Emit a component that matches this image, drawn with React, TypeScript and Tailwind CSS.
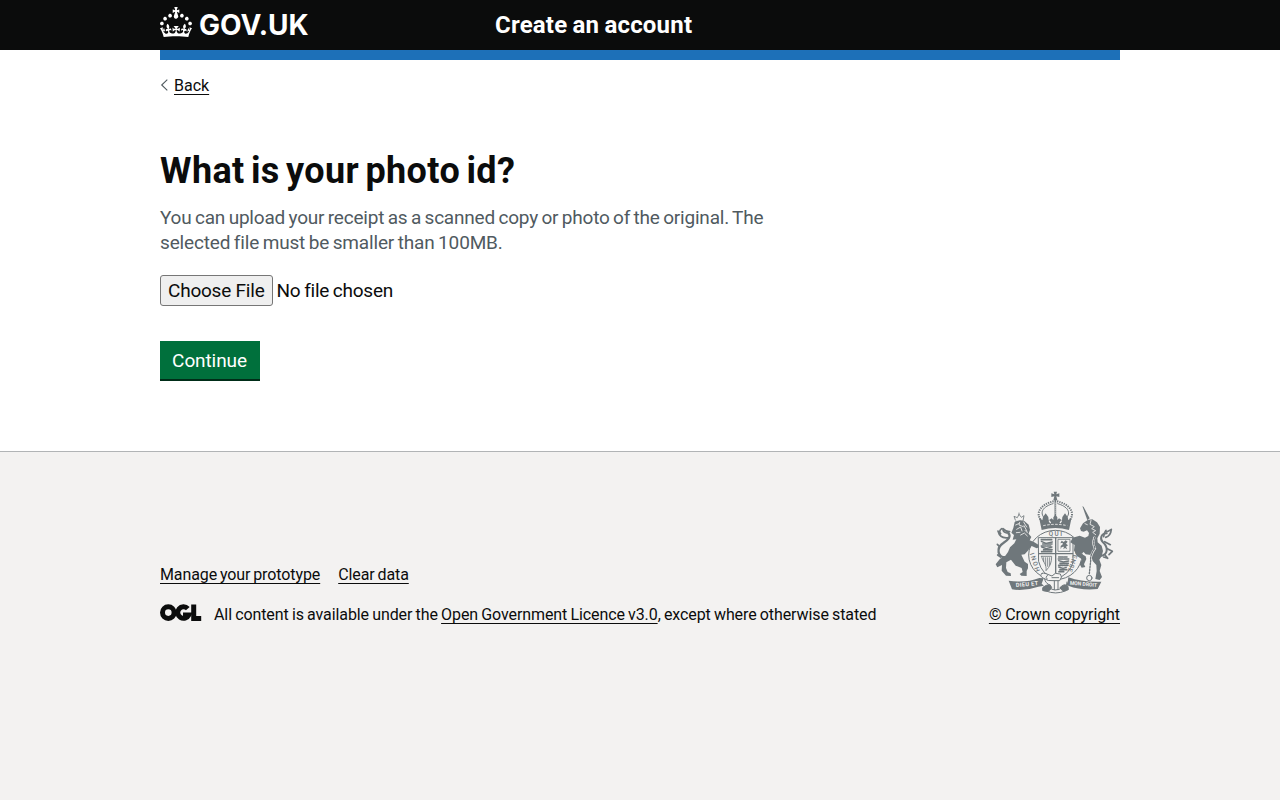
import React from 'react';

function Crown() {
  return (
    <svg className="h-[30px] w-8 shrink-0" viewBox="0 0 32 30" fill="currentColor" aria-hidden="true">
      <path d="M22.6 10.4c-1 .4-2-.1-2.4-1-.4-.9.1-2 1-2.4.9-.4 2 .1 2.4 1s-.1 2-1 2.4m4.9 3c-1 .4-2-.1-2.4-1-.4-.9.1-2 1-2.4.9-.4 2 .1 2.4 1s0 2-1 2.4m3.3 4.8c-1 .4-2-.1-2.4-1-.4-.9.1-2 1-2.4.9-.4 2 .1 2.4 1s-.1 2-1 2.4M17 4.7l2.3 1.2V2.5l-2.3.7-.2-.2.9-3h-3.4l.9 3-.2.2c-.1.1-2.3-.7-2.3-.7v3.4L15 4.7c.1.1.1.2.2.2l-1.3 4c-.1.2-.1.4-.1.6 0 1.1.8 2 1.9 2.2h.7c1-.2 1.9-1.1 1.9-2.1 0-.2 0-.4-.1-.6l-1.3-4c-.1-.2 0-.2.1-.3m-7.6 5.7c.9.4 2-.1 2.4-1 .4-.9-.1-2-1-2.4-.9-.4-2 .1-2.4 1s0 2 1 2.4m-5 3c.9.4 2-.1 2.4-1 .4-.9-.1-2-1-2.4-.9-.4-2 .1-2.4 1s.1 2 1 2.4m-3.2 4.8c.9.4 2-.1 2.4-1 .4-.9-.1-2-1-2.4-.9-.4-2 .1-2.4 1s0 2 1 2.4m14.8 11c4.4 0 8.6.3 12.3.8 1.1-4.5 2.4-7 3.7-8.8l-2.5-.9c.2 1.3.3 1.9 0 2.7-.4-.4-.8-1.1-1.1-2.3l-1.2 4c.7-.5 1.3-.8 2-.9-1.1 2.5-2.6 3.1-3.5 3-1.1-.2-1.7-1.2-1.5-2.1.3-1.2 1.5-1.5 2.1-.1 1.1-2.3-.8-3-2-2.3 1.9-1.9 2.1-3.5.6-5.6-2.1 1.6-2.1 3.2-1.2 5.5-1.2-1.4-3.2-.6-2.5 1.6.9-1.4 2.1-.5 1.9.8-.2 1.1-1.7 2.1-3.5 1.9-2.7-.2-2.9-2.1-2.9-3.6.7-.1 1.9.5 2.9 1.9l.4-4.3c-1.1 1.1-2.1 1.4-3.2 1.4.4-1.2 2.1-3 2.1-3h-5.4s1.7 1.9 2.1 3c-1.1 0-2.1-.2-3.2-1.4l.4 4.3c1-1.4 2.2-2 2.9-1.9-.1 1.5-.2 3.4-2.9 3.6-1.9.2-3.4-.8-3.5-1.9-.2-1.3 1-2.2 1.9-.8.7-2.3-1.2-3-2.5-1.6.9-2.2.9-3.9-1.2-5.5-1.5 2-1.3 3.7.6 5.6-1.2-.7-3.1 0-2 2.3.6-1.4 1.8-1.1 2.1.1.2.9-.3 1.9-1.5 2.1-.9.2-2.4-.5-3.5-3 .6 0 1.2.3 2 .9l-1.2-4c-.3 1.1-.7 1.9-1.1 2.3-.3-.8-.2-1.4 0-2.7l-2.9.9C1.3 23 2.6 25.5 3.7 30c3.7-.5 7.9-.8 12.3-.8" />
    </svg>
  );
}

function RoyalArms() {
  return (
    <svg className="h-[104px] w-[125px]" viewBox="30 18 375 312" fill="none" stroke="#6f777b" strokeWidth="3" strokeLinecap="round" strokeLinejoin="round" aria-hidden="true">
      {/* crown */}
      <path d="M206 20h10l-2 8 9-3v11l-9-2 3 12h-12l3-12-9 2V25l9 3z" fill="#6f777b" stroke="none" />
      <path d="M171 109C148 86 166 57 209 48M251 109c23-23 5-52-38-61" strokeWidth="6" strokeDasharray="4 3" strokeLinecap="butt" />
      <path d="M179 100c-18-18-4-36 25-44M243 100c18-18 4-36-25-44" strokeWidth="3" />
      <path d="M211 45v60" strokeWidth="5" />
      <path d="M211 54v36" stroke="#f3f2f1" strokeWidth="2" strokeDasharray="1 5" />
      <path d="M162 97l10 9 2-10 8-11 8 11 1 10 9-6 5 5 0-8 6-8 6 8 0 8 5-5 9 6 1-10 8-11 8 11 2 10 10-9-8 38q-41-12-82 0z" fill="#6f777b" stroke="none" />
      <path d="M175 122q36-8 72 0" stroke="#f3f2f1" strokeWidth="3" strokeDasharray="7 5" strokeLinecap="butt" />
      <path d="M193 108l3 5M229 108l-3 5" stroke="#f3f2f1" strokeWidth="4" />
      {/* garter and shield */}
      <ellipse cx="211" cy="210" rx="80" ry="74" strokeWidth="3" />
      <path d="M161 158h103v74q-10 38-53 50-41-13-50-52z" fill="#f3f2f1" strokeWidth="3" />
      <path d="M212 158v121M162 206h101" strokeWidth="4" />
      <path d="M169 164h33M173 177h28M169 183h28M176 194h25M170 200h30M221 216h27M220 222h33M225 235h27M221 241h28M225 254h20M222 260h17" strokeWidth="5" strokeDasharray="8 2 4 3" />
      <path d="M169 169l14 6 19-4M170 186l14 5 17-5M221 227l14 4 16-3M221 246l13 4 10-3" strokeWidth="4" />
      <path d="M220 163h35v36h-35z" strokeWidth="2.5" />
      <path d="M230 167l6 4 6-5 6 4-5 6 6 5-6 4 4 8-7-4-5 4 2-8-7 1-3 7 0-10 7-6-2-4-6 2z" fill="#6f777b" stroke="none" />
      <path d="M170 214h30q1 25-17 43c3-21-12-28-13-43zM176 218v12M182 218v23M188 218v26M194 218v22" strokeWidth="2.5" />
      <g fill="#6f777b" stroke="none" fontFamily="Roboto, sans-serif" fontSize="19" fontWeight="500">
        <text x="191" y="154" textLength="40">QUI</text>
        <text transform="translate(165 257) rotate(-108)" textLength="58">HONI</text>
        <text transform="translate(269 194) rotate(108)" textLength="68">PENSE</text>
      </g>
      {/* lion */}
      <path d="M91 105l-4-11 10 4 5-10 7 9 8-5-3 16M92 109h22M102 89v-5" strokeWidth="2.5" />
      <path d="M89 111l16-5 13 2 13 11 4 15-4 12 8 10-5 10 14 6 12 7 2 8-7 3-15-7-12 15-9 10-10 1 10 21 10 7v13l-4 8v15l-16-1-5-5 9-6-3-12-18-7-14-18-14 8-1 17 5 12 9 4 1 8-15-1-13-15 1-17-14 7-5-9 13-17 15-7 9-13 6-14 13-12 6-12-11 1 4-14-8-7 6-14z" fill="#6f777b" stroke="none" />
      <path d="M92 120l9-4M104 112l-2 8 13 5M95 133l12-7 4 12M94 143l11-1M116 111l9 15M117 122l9 17M107 150l11-6 9 9M120 136l8 8" stroke="#f3f2f1" strokeWidth="2.5" />
      <path d="M65 216c-30 5-31-29-10-42 12-8 26-19 14-31" strokeWidth="7" />
      <path d="M70 158q-25 4-31-20M47 146q-7-7 3-15M65 144q-12-2-11-13 10 10 20 9M47 216l-9-6M44 185l-7-7" strokeWidth="5" />
      {/* unicorn */}
      <path d="M292 63l4 3 18 34-7 6z" fill="#6f777b" stroke="none" />
      <path d="M294 115L308 105 322 103 336 112 345 126 344 146 337 160 338 172 350 182 354 198 350 214 343 224 349 240 344 258 351 276 344 285 331 282 335 258 334 240 323 228 318 210 302 208 296 201 289 206 302 214 304 222 297 238 301 246 290 248 284 238 291 223 275 212 267 196 269 180 256 172 263 158 284 152 300 158 310 153 312 144 306 136 296 140 288 138 285 130z" fill="#6f777b" stroke="none" />
      <path d="M300 116l7 3M318 106l-3 12 13 7-8 6 12 6-9 5 9 7" stroke="#f3f2f1" strokeWidth="2.5" />
      <path d="M328 158q-6 19 2 32-15 21-13 36-5 10-4 22" stroke="#f3f2f1" strokeWidth="7" />
      <path d="M329 157q-6 19 1 32-15 21-13 38l-4 39" strokeWidth="4" strokeDasharray="5 4" />
      <circle cx="313" cy="279" r="8" strokeWidth="3" />
      <path d="M346 213c24-3 24-26 8-41-10-10-7-26 11-27" strokeWidth="6" />
      <path d="M356 155q3-16 7-19-3 10 16-3-2 20-17 24M359 170l17 9M367 191l15 8-10 10M360 210l8 10-12-4" strokeWidth="5" />
      {/* motto ribbon and base */}
      <path d="M71 287q50 8 92-8l13 1-6 16 7 6-17 3q-41 14-79 8zM250 277q42 15 99 13l-11 22q-50 5-88-10l-10-2 8-8z" fill="#6f777b" stroke="none" />
      <text x="93" y="306" transform="rotate(-5 93 306)" fill="#f3f2f1" stroke="none" fontFamily="Roboto, sans-serif" fontSize="17" fontWeight="700" textLength="67">DIEU ET</text>
      <text x="254" y="299" transform="rotate(5 254 299)" fill="#f3f2f1" stroke="none" fontFamily="Roboto, sans-serif" fontSize="16" fontWeight="700" textLength="82" lengthAdjust="spacingAndGlyphs">MON DROIT</text>
      <path d="M171 265q-9 8 3 14 15 11 33 8h17q10-12 2-20l-15-2-10 8-18-7q-9-3-12-1zM187 271q-8 6-1 11M201 278h20M179 282q1 13 18 19-6 14-21 6M246 291q0 16-14 17-10 7-22 7-11 0-17-9" fill="#f3f2f1" />
      <path d="M174 307q20-16 26 0-5 16-26 10zM226 307q12-14 23-3l1 10q-21 10-24-7z" fill="#6f777b" />
      <path d="M183 318q29 12 58 0M208 288v26M219 288v26" strokeWidth="3" />
    </svg>
  );
}

const linkClass = 'underline decoration-1 underline-offset-[3px]';

export default function App() {
  return (
    <div className="flex min-h-screen flex-col bg-white font-['Roboto','Liberation_Sans',sans-serif] text-[#0b0c0c]">
      <header className="h-[50px] bg-[#0b0c0c] text-white">
        <div className="mx-auto flex h-[60px] w-[960px] items-start border-b-[10px] border-[#1d70b8]">
          <a href="#" className="flex w-[335px] items-start pt-[7px]">
            <Crown />
            <span className="ml-[7px] pt-[2px] font-['Inter',sans-serif] text-[28px] leading-[32px] font-bold">GOV.UK</span>
          </a>
          <a href="#" className="pt-[10px] text-2xl leading-[30px] font-bold tracking-[0.2px] [word-spacing:-1px] whitespace-nowrap">Create an account</a>
        </div>
      </header>
      <div className="mx-auto w-[960px] pt-[26px]">
        <a href="#" className="flex h-5 items-center text-base leading-5">
          <svg className="mr-[6px] mb-[2px] h-3 w-2" viewBox="0 0 8 12" fill="none" stroke="#505a5f" strokeWidth="1.1" aria-hidden="true">
            <path d="M7.3.6 1.7 6l5.6 5.4" />
          </svg>
          <span className={linkClass}>Back</span>
        </a>
        <main className="pt-[55px] pb-[70px]">
          <h1 className="text-[36px] leading-[40px] font-bold tracking-[0.38px] [word-spacing:-3px] whitespace-nowrap">What is your photo id?</h1>
          <p className="mt-[14px] text-[19px] leading-[25px] whitespace-nowrap text-[#505a5f]">
            <span className="tracking-[-0.21px] [word-spacing:-1px]">You can upload your receipt as a scanned copy or photo of the original. The</span>
            <br />
            <span className="tracking-[-0.16px] [word-spacing:-1px]">selected file must be smaller than 100MB.</span>
          </p>
          <input
            type="file"
            aria-label="Photo id"
            className="mt-5 block h-[31px] w-[400px] text-[19px] leading-[25px] tracking-[-0.25px] [word-spacing:-0.7px] file:mr-1 file:h-[31px] file:w-[112.5px] file:rounded-[3px] file:border file:border-[#767676] file:bg-[#efefef] file:p-0 file:tracking-[-0.22px]"
          />
          <button className="mt-[35px] block h-[38px] w-[100px] bg-[#00703c] pr-[7px] pl-[6px] text-[19px] leading-[19px] tracking-[-0.1px] text-white shadow-[0_2px_0_#002d18]">Continue</button>
        </main>
      </div>
      <footer className="mt-0.5 flex-1 border-t border-[#b1b4b6] bg-[#f3f2f1] text-base leading-5">
        <div className="mx-auto flex w-[960px] items-end justify-between pt-[39px]">
          <div>
            <div className="mb-5 flex gap-[18px] tracking-[-0.1px] whitespace-nowrap [word-spacing:-1px]">
              <a href="#" className={linkClass}>Manage your prototype</a>
              <a href="#" className={linkClass}>Clear data</a>
            </div>
            <div className="flex h-5 items-center">
              <svg className="mb-[5px] h-[18px] w-[54px]" viewBox="0 0 54 18" aria-hidden="true">
                <g fill="none" stroke="#0b0c0c" strokeWidth="5">
                  <circle cx="8.3" cy="8.6" r="5.8" />
                  <path d="M27.8 4.6a5.8 5.8 0 1 0 1 6.4H23" />
                  <path d="M33.7.4v14h7.5" />
                </g>
              </svg>
              <span className="tracking-[-0.1px] whitespace-nowrap [word-spacing:-0.6px]">
                All content is available under the <a href="#" className={linkClass}>Open Government Licence v3.0</a>, except where otherwise stated
              </span>
            </div>
          </div>
          <div className="flex flex-col items-end">
            <RoyalArms />
            <a href="#" className={`mt-[10px] tracking-[-0.08px] whitespace-nowrap ${linkClass}`}>© Crown copyright</a>
          </div>
        </div>
      </footer>
    </div>
  );
}
